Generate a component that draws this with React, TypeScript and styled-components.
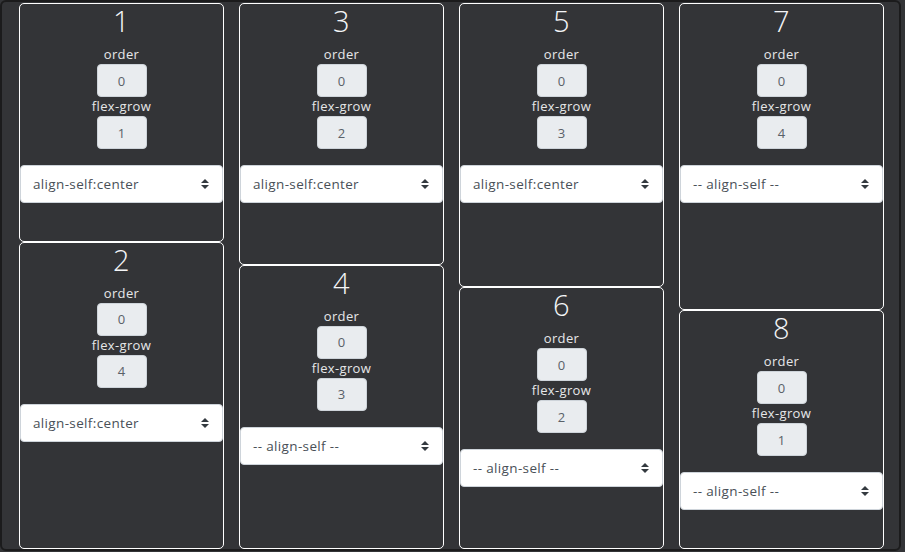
import React from "react";
import styled, { createGlobalStyle } from "styled-components";

const GlobalStyle = createGlobalStyle`
  html, body {
    margin: 0;
    padding: 0;
    background: #333437;
  }
  body {
    font-family: "Open Sans", "Noto Sans", sans-serif;
    color: #f1f1f1;
  }
  * { box-sizing: border-box; }
`;

const Frame = styled.div`
  width: 901px;
  height: 551px;
  border: 2px solid #1b1b1c;
  border-radius: 6px;
  background: #333437;
  padding: 1px 0 0 17px;
  display: grid;
  grid-template-columns: repeat(4, 205px);
  column-gap: 15px;
`;

const Column = styled.div`
  display: flex;
  flex-direction: column;
  min-height: 0;
`;

const Card = styled.div<{ $grow: number }>`
  flex: ${(p) => p.$grow} 1 auto;
  border: 1px solid #ffffff;
  border-radius: 5px;
  display: flex;
  flex-direction: column;
  align-items: center;
  padding-bottom: 15px;
`;

const Title = styled.h3`
  margin: 0 0 8px;
  height: 33px;
  font-size: 29px;
  line-height: 33px;
  font-weight: 300;
  color: #f4f5f7;
  letter-spacing: 0.5px;
`;

const Label = styled.div`
  height: 19px;
  font-size: 13px;
  line-height: 19px;
  color: #e6e7e9;
  letter-spacing: 0.35px;
`;

const ValueBox = styled.input`
  width: 50px;
  height: 33px;
  border: 1px solid #ced4da;
  border-radius: 4px;
  background: #e9ecef;
  color: #5a6169;
  text-align: center;
  font-family: inherit;
  font-size: 13px;
  padding: 0;
  outline: none;
`;

const Select = styled.div`
  align-self: stretch;
  margin-top: 16px;
  height: 38px;
  background: #ffffff;
  border: 1px solid #ced4da;
  border-radius: 4px;
  display: flex;
  align-items: center;
  justify-content: space-between;
  padding: 0 13px 0 12px;
  color: #495057;
  font-size: 13.5px;
  letter-spacing: 0.35px;
`;

const Arrows = () => (
  <svg width="8" height="10" viewBox="0 0 4 5" aria-hidden="true">
    <path d="M2 0L0 2h4zm0 5L0 3h4z" fill="#343a40" />
  </svg>
);

type Item = { n: number; grow: number; align: string | null };

const columns: Item[][] = [
  [
    { n: 1, grow: 1, align: "center" },
    { n: 2, grow: 4, align: "center" },
  ],
  [
    { n: 3, grow: 2, align: "center" },
    { n: 4, grow: 3, align: null },
  ],
  [
    { n: 5, grow: 3, align: "center" },
    { n: 6, grow: 2, align: null },
  ],
  [
    { n: 7, grow: 4, align: null },
    { n: 8, grow: 1, align: null },
  ],
];

export default function App() {
  return (
    <>
      <GlobalStyle />
      <Frame>
        {columns.map((col, i) => (
          <Column key={i}>
            {col.map((it) => (
              <Card key={it.n} $grow={it.grow}>
                <Title>{it.n}</Title>
                <Label>order</Label>
                <ValueBox readOnly value="0" />
                <Label>flex-grow</Label>
                <ValueBox readOnly value={String(it.grow)} />
                <Select role="listbox">
                  <span>{it.align ? `align-self:${it.align}` : "-- align-self --"}</span>
                  <Arrows />
                </Select>
              </Card>
            ))}
          </Column>
        ))}
      </Frame>
    </>
  );
}
